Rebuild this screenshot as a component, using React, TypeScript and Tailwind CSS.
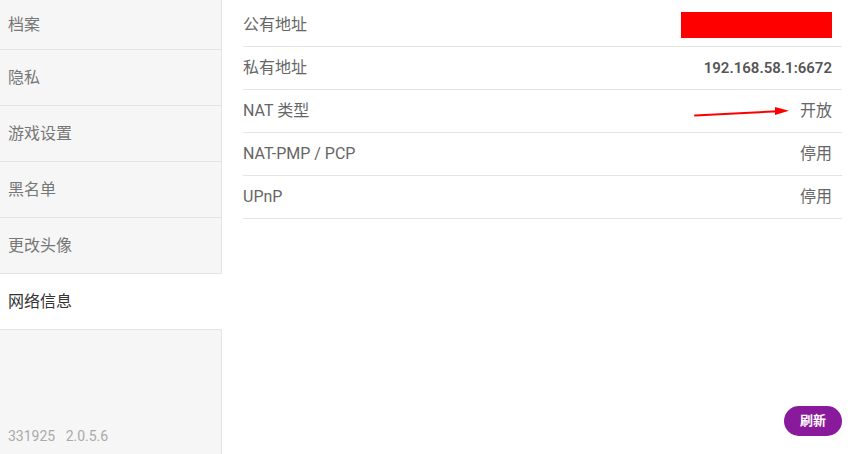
import React from 'react';

const MENU = ['档案', '隐私', '游戏设置', '黑名单', '更改头像', '网络信息'];
const ACTIVE = '网络信息';

const font = { fontFamily: 'Roboto, "Liberation Sans", "Noto Sans CJK SC", sans-serif' };

// 侧边栏
const Sidebar: React.FC = () => {
  return (
    <aside className="w-[222px] shrink-0 flex flex-col bg-[#f6f6f6]">
      {MENU.map((item, index) => {
        const active = item === ACTIVE;
        return (
          <div
            key={item}
            className={
              (index === 0 ? 'h-[50px] ' : 'h-[56px] ') +
              (active
                ? 'bg-white text-[#333] border-r border-r-transparent '
                : 'text-[#777] border-r border-r-[#e4e4e4] ') +
              'flex items-center pl-2 text-[16px] border-b border-b-[#e4e4e4]'
            }
          >
            {item}
          </div>
        );
      })}
      <div className="flex-1 flex items-end pl-2 pb-[7px] border-r border-r-[#e4e4e4]">
        <span className="text-[14px] text-[#aaa] whitespace-pre">331925   2.0.5.6</span>
      </div>
    </aside>
  );
};

// 箭头
const Arrow: React.FC = () => (
  <svg
    className="absolute right-[51px] top-[16px]"
    width="98"
    height="12"
    viewBox="0 0 98 12"
  >
    <path d="M2 9.5 L86 5.2" stroke="#ff0000" strokeWidth="2" strokeLinecap="round" />
    <path d="M82 1 L96 4.8 L82 9 Z" fill="#ff0000" />
  </svg>
);

const Row: React.FC<{ label: string; children: React.ReactNode; extra?: React.ReactNode }> = ({
  label,
  children,
  extra
}) => (
  <div className="relative h-[43px] flex items-center justify-between border-b border-[#e4e4e4] pr-[10px]">
    <span className="text-[16px] text-[#666]">{label}</span>
    {extra}
    {children}
  </div>
);

export default function App() {
  return (
    <div className="w-[854px] h-[454px] flex bg-white overflow-hidden" style={font}>
      <Sidebar />

      <main className="flex-1 flex flex-col pl-[21px] pr-[12px] pt-[4px]">
        <Row label="公有地址">
          <div className="w-[151px] h-[26px] bg-[#ff0000]" />
        </Row>
        <Row label="私有地址">
          <span className="text-[15px] font-semibold text-[#555]">192.168.58.1:6672</span>
        </Row>
        <Row label="NAT 类型" extra={<Arrow />}>
          <span className="text-[16px] text-[#666]">开放</span>
        </Row>
        <Row label="NAT-PMP / PCP">
          <span className="text-[16px] text-[#666]">停用</span>
        </Row>
        <Row label="UPnP">
          <span className="text-[16px] text-[#666]">停用</span>
        </Row>

        <div className="mt-auto mb-[18px] self-end">
          <button className="w-[58px] h-[30px] rounded-full bg-[#8a1a9c] text-white text-[13px] font-bold">
            刷新
          </button>
        </div>
      </main>
    </div>
  );
}
